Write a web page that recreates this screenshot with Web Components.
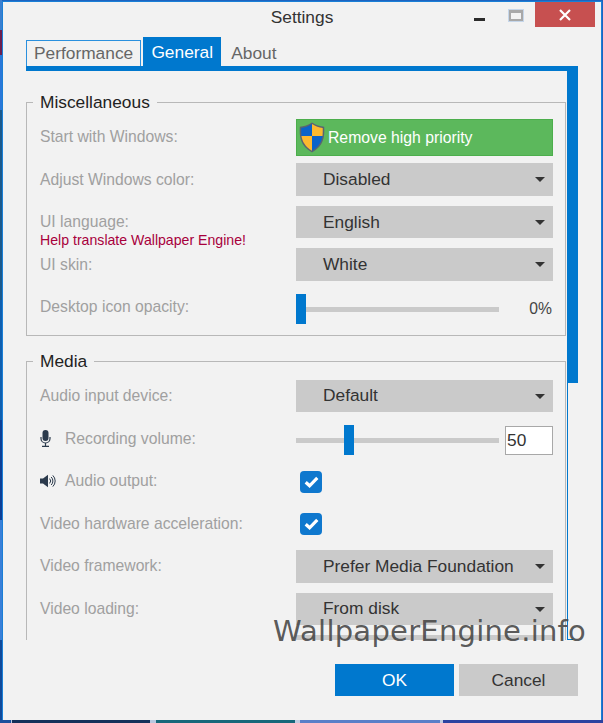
<!DOCTYPE html>
<html lang="en">
<head>
<meta charset="utf-8">
<title>Settings</title>
<style>
    html, body { margin: 0; height: 100%; }
    body {
        width: 603px;
        height: 723px;
        overflow: hidden;
        font-family: "Liberation Sans", Arial, sans-serif;
        /* Wallpaper strips that show around the window */
        background:
            linear-gradient(90deg, #1c4f9c 0 11px, #b9c8e0 11px 12px, #14305a 12px 150px, #b9c8e0 150px 156px, #17677a 156px 295px, #c0cce0 295px 300px, #5a7fc8 300px 440px, #c0cce0 440px 443px, #2c42a0 443px) bottom / 100% 3px no-repeat,
            linear-gradient(180deg, #3a7fd0 0 30px, #6b1f4f 30px 55px, #2a78d8 55px 110px, #1c5a8c 110px 300px, #0f5fb0 300px 420px, #0d3f96 420px 520px, #3a80d8 520px 640px, #114a9a 640px) left / 2px 100% no-repeat,
            #1d64c0;
    }
    .pct { font-size: 15.7px; color: #444; }
</style>
</head>
<body>

<settings-window heading="Settings">
    <tab-strip slot="tabs">
        <tab-item outlined>Performance</tab-item>
        <tab-item active>General</tab-item>
        <tab-item>About</tab-item>
    </tab-strip>

    <settings-group heading="Miscellaneous" top="21" start="7" end="11.5">
        <setting-row style="margin-bottom:-3px; --label-nudge:-1px">
            Start with Windows:
            <priority-button slot="control">Remove high priority</priority-button>
        </setting-row>
        <setting-row style="--label-nudge:2px">
            Adjust Windows color:
            <combo-box slot="control">Disabled</combo-box>
        </setting-row>
        <setting-row>
            UI language:
            <span slot="note">Help translate Wallpaper Engine!</span>
            <combo-box slot="control" style="padding-top:1px">English</combo-box>
        </setting-row>
        <setting-row style="--label-nudge:2px">
            UI skin:
            <combo-box slot="control">White</combo-box>
        </setting-row>
        <setting-row style="--label-nudge:-1px">
            Desktop icon opacity:
            <range-slider slot="control" pos="0"><span class="pct">0%</span></range-slider>
        </setting-row>
    </settings-group>

    <settings-group heading="Media" top="15" start="8.5" end="10">
        <setting-row>
            Audio input device:
            <combo-box slot="control">Default</combo-box>
        </setting-row>
        <setting-row>
            <svg slot="icon" width="11" height="17" viewBox="0 0 11 17" style="margin-right:14px">
                <rect x="2.5" y="0" width="6" height="11" rx="3" fill="#2b3a4c"/>
                <path d="M1 7v1.500a4.500 4.500 0 0 0 9 0V7" fill="none" stroke="#2b3a4c" stroke-width="1.200"/>
                <path d="M5.500 13v3M2 16.400h7" fill="none" stroke="#2b3a4c" stroke-width="1.200"/>
            </svg>
            Recording volume:
            <range-slider slot="control" pos="48"><value-box>50</value-box></range-slider>
        </setting-row>
        <setting-row>
            <svg slot="icon" width="16" height="14" viewBox="0 0 16 14" style="margin-right:9px">
                <path d="M0 4.500h3L8 .8v12.400L3 9.500H0z" fill="#2b3a4c"/>
                <path d="M9.600 4.600a3.400 3.400 0 0 1 0 4.800M11.200 3a5.600 5.600 0 0 1 0 8M12.800 1.400a7.800 7.800 0 0 1 0 11.200" fill="none" stroke="#2b3a4c" stroke-width="1"/>
            </svg>
            Audio output:
            <check-box slot="control"></check-box>
        </setting-row>
        <setting-row>
            Video hardware acceleration:
            <check-box slot="control" style="margin-top:1px"></check-box>
        </setting-row>
        <setting-row>
            Video framework:
            <combo-box slot="control">Prefer Media Foundation</combo-box>
        </setting-row>
        <setting-row>
            Video loading:
            <combo-box slot="control">From disk</combo-box>
        </setting-row>
        <setting-row>
            &nbsp;
            <combo-box slot="control"></combo-box>
        </setting-row>
    </settings-group>

    <push-button slot="actions" primary>OK</push-button>
    <push-button slot="actions">Cancel</push-button>
</settings-window>

<script>
// Fenêtre complète : barre de titre, onglets, zone défilante, boutons
class SettingsWindow extends HTMLElement {
    constructor() {
        super();
        this.attachShadow({ mode: "open" });
        this.shadowRoot.innerHTML = `
        <style>
            :host {
                display: flex;
                flex-direction: column;
                position: relative;
                box-sizing: border-box;
                width: 600px;
                height: 719px;
                margin: 1px 0 0 2px;
                border: 1px solid #1a7fd6;
                border-bottom-width: 0;
                background-color: #f2f2f2;
            }
            .titlebar {
                display: grid;
                grid-template-columns: 1fr auto 1fr;
                height: 35px;
                flex: none;
            }
            .title {
                grid-column: 2;
                font-size: 17.33px;
                line-height: 30px;
                color: #333;
            }
            .controls {
                grid-column: 3;
                justify-self: end;
                display: flex;
                align-items: flex-start;
                margin-right: 6px;
            }
            .min {
                width: 11px;
                height: 3px;
                margin: 16px 24px 0 0;
                background-color: #2b2b2b;
            }
            .max {
                box-sizing: border-box;
                width: 14px;
                height: 11px;
                margin: 8px 12px 0 0;
                border: 2px solid #a8a8a8;
                border-top-width: 3px;
                box-shadow: 0 0 0 1px #c5d6ea;
            }
            .close {
                display: flex;
                align-items: center;
                justify-content: center;
                width: 60px;
                height: 25px;
                background-color: #c75050;
            }
            .body {
                display: flex;
                flex: none;
                height: 569px;
                margin-left: 23px;
                margin-right: 23px;
            }
            .scroller {
                flex: 1;
                min-width: 0;
                overflow: hidden;
            }
            .bar {
                display: flex;
                flex-direction: column;
                flex: none;
                width: 11px;
                margin-top: -5px;
            }
            .thumb {
                height: 317px;
                flex: none;
                background-color: #0078ce;
            }
            .track {
                flex: 1;
                border-left: 1px solid #0078ce;
                background: linear-gradient(#0078ce, #0078ce) left bottom / 5px 1px no-repeat;
            }
            .actions {
                display: flex;
                justify-content: flex-end;
                gap: 5px;
                padding: 24px 23px 0 0;
            }
            .watermark {
                position: absolute;
                left: 270px;
                top: 610px;
                font-family: "DejaVu Sans", sans-serif;
                font-size: 29px;
                line-height: 38px;
                letter-spacing: 0.25px;
                white-space: nowrap;
                color: rgba(70, 70, 70, 0.9);
            }
        </style>
        <div class="titlebar">
            <div class="title"></div>
            <div class="controls">
                <div class="min"></div>
                <div class="max"></div>
                <div class="close">
                    <svg width="12" height="12" viewBox="0 0 12 12"><path d="M1 1l10 10M11 1L1 11" stroke="#fff" stroke-width="2.200" fill="none"/></svg>
                </div>
            </div>
        </div>
        <slot name="tabs"></slot>
        <div class="body">
            <div class="scroller"><slot></slot></div>
            <div class="bar"><div class="thumb"></div><div class="track"></div></div>
        </div>
        <div class="actions"><slot name="actions"></slot></div>
        <div class="watermark">WallpaperEngine.info</div>
      `;
        this.shadowRoot.querySelector(".title").textContent = this.getAttribute("heading");
    }
}
customElements.define("settings-window", SettingsWindow);

class TabStrip extends HTMLElement {
    constructor() {
        super();
        this.attachShadow({ mode: "open" });
        this.shadowRoot.innerHTML = `
        <style>
            :host {
                display: flex;
                align-items: flex-end;
                height: 29px;
                margin: 0 23px;
                border-bottom: 5px solid #0078ce;
            }
        </style>
        <slot></slot>
      `;
    }
}
customElements.define("tab-strip", TabStrip);

class TabItem extends HTMLElement {
    constructor() {
        super();
        this.attachShadow({ mode: "open" });
        this.shadowRoot.innerHTML = `
        <style>
            :host {
                display: block;
                box-sizing: border-box;
                height: 26px;
                padding: 0 10px;
                font-size: 17.33px;
                line-height: 26px;
                color: #666;
            }
            :host([outlined]) {
                margin-right: 2px;
                padding: 0 7px;
                border: 1px solid #2a90de;
                border-bottom: 0;
                line-height: 25px;
            }
            :host([active]) {
                height: 29px;
                padding: 0 8.2px;
                background-color: #0078ce;
                color: #fff;
                line-height: 31px;
            }
        </style>
        <slot></slot>
      `;
    }
}
customElements.define("tab-item", TabItem);

// Groupe avec légende, à la manière d'un fieldset
class SettingsGroup extends HTMLElement {
    constructor() {
        super();
        this.attachShadow({ mode: "open" });
        this.shadowRoot.innerHTML = `
        <style>
            :host {
                display: block;
                margin-right: 1px;
            }
            fieldset {
                margin: 0;
                padding: 0 12px 0 13px;
                border: 1px solid #b8b8b8;
                min-width: 0;
            }
            legend {
                margin-left: -7px;
                padding: 0 7px;
                font-size: 17.33px;
                line-height: 20px;
                color: #222;
            }
            .rows {
                display: flex;
                flex-direction: column;
                gap: 10px;
            }
        </style>
        <fieldset>
            <legend></legend>
            <div class="rows"><slot></slot></div>
        </fieldset>
      `;
        this.shadowRoot.querySelector("legend").textContent = this.getAttribute("heading");
        const rows = this.shadowRoot.querySelector(".rows");
        rows.style.paddingTop = this.getAttribute("start") + "px";
        rows.style.paddingBottom = this.getAttribute("end") + "px";
        this.style.marginTop = this.getAttribute("top") + "px";
    }
}
customElements.define("settings-group", SettingsGroup);

class SettingRow extends HTMLElement {
    constructor() {
        super();
        this.attachShadow({ mode: "open" });
        this.shadowRoot.innerHTML = `
        <style>
            :host {
                display: grid;
                grid-template-columns: 256px 257px;
                align-items: center;
                min-height: 32.5px;
                font-size: 15.7px;
                color: #a0a0a0;
            }
            .label {
                display: flex;
                align-items: center;
                margin-top: var(--label-nudge, 0);
            }
            .note {
                height: 0;
                font-size: 14.13px;
                line-height: 18px;
                color: #a8003c;
            }
        </style>
        <div>
            <div class="label"><slot name="icon"></slot><span><slot></slot></span></div>
            <div class="note"><slot name="note"></slot></div>
        </div>
        <slot name="control"></slot>
      `;
    }
}
customElements.define("setting-row", SettingRow);

class ComboBox extends HTMLElement {
    constructor() {
        super();
        this.attachShadow({ mode: "open" });
        this.shadowRoot.innerHTML = `
        <style>
            :host {
                display: flex;
                align-items: center;
                justify-content: space-between;
                box-sizing: border-box;
                height: 32.5px;
                padding: 0 8px 0 27px;
                background-color: #cacaca;
                font-size: 17.33px;
                color: #333;
            }
            .arrow {
                width: 0;
                height: 0;
                margin-top: 1px;
                border-left: 5px solid transparent;
                border-right: 5px solid transparent;
                border-top: 5px solid #333;
            }
        </style>
        <span><slot></slot></span>
        <div class="arrow"></div>
      `;
    }
}
customElements.define("combo-box", ComboBox);

class PriorityButton extends HTMLElement {
    constructor() {
        super();
        this.attachShadow({ mode: "open" });
        this.shadowRoot.innerHTML = `
        <style>
            :host {
                display: flex;
                align-items: center;
                box-sizing: border-box;
                height: 37px;
                padding-left: 2px;
                border: 1px solid #4cae4c;
                background-color: #5cb85c;
                font-size: 15.75px;
                color: #fff;
            }
            svg { margin-right: 3px; flex: none; }
        </style>
        <svg width="26" height="31" viewBox="0 0 26 31">
            <path d="M13 .5C9 3 5 4.400.8 4.800c-.5 10 .2 19 12.200 25.700C25 23.800 25.700 14.800 25.200 4.800 21 4.400 17 3 13 .5z" fill="#5b6470"/>
            <path d="M13 2C9.500 4.200 6 5.500 2.300 6 2.200 8.500 2.200 11 2.500 14H13z" fill="#0a63c9"/>
            <path d="M13 2c3.500 2.200 7 3.500 10.700 4 .1 2.500.1 5-.2 8H13z" fill="#fdb92f"/>
            <path d="M2.500 14c.8 5.500 3.500 10.500 10.500 14.800V14z" fill="#fdb92f"/>
            <path d="M23.500 14c-.8 5.500-3.500 10.500-10.500 14.800V14z" fill="#0a63c9"/>
        </svg>
        <span><slot></slot></span>
      `;
    }
}
customElements.define("priority-button", PriorityButton);

class RangeSlider extends HTMLElement {
    constructor() {
        super();
        this.attachShadow({ mode: "open" });
        this.shadowRoot.innerHTML = `
        <style>
            :host {
                display: flex;
                align-items: center;
                height: 30px;
                padding-top: 3px;
            }
            .track {
                position: relative;
                flex: none;
                width: 203px;
                height: 5px;
                margin-top: 1px;
                background-color: #cacaca;
            }
            .thumb {
                position: absolute;
                top: -13px;
                width: 10px;
                height: 30px;
                background-color: #0078ce;
            }
            .side {
                flex: 1;
                display: flex;
                justify-content: flex-end;
                padding-right: 1px;
            }
        </style>
        <div class="track"><div class="thumb"></div></div>
        <div class="side"><slot></slot></div>
      `;
        this.shadowRoot.querySelector(".thumb").style.left = this.getAttribute("pos") + "px";
    }
}
customElements.define("range-slider", RangeSlider);

class ValueBox extends HTMLElement {
    constructor() {
        super();
        this.attachShadow({ mode: "open" });
        this.shadowRoot.innerHTML = `
        <style>
            :host {
                display: block;
                box-sizing: border-box;
                width: 48px;
                height: 29px;
                margin: 1px -1px 0 0;
                padding-left: 1px;
                border: 1px solid #a8a8a8;
                background-color: #fff;
                font-size: 17.33px;
                line-height: 27px;
                color: #333;
            }
        </style>
        <slot></slot>
      `;
    }
}
customElements.define("value-box", ValueBox);

class CheckBox extends HTMLElement {
    constructor() {
        super();
        this.attachShadow({ mode: "open" });
        this.shadowRoot.innerHTML = `
        <style>
            :host {
                display: flex;
                align-items: center;
                justify-content: center;
                width: 22px;
                height: 22px;
                margin: 2px 0 0 4px;
                border-radius: 4px;
                background-color: #0f78ce;
            }
        </style>
        <svg width="15" height="12" viewBox="0 0 15 12">
            <path d="M1.700 6.200l3.900 3.600L13.300 1.900" fill="none" stroke="#fff" stroke-width="3.200"/>
        </svg>
      `;
    }
}
customElements.define("check-box", CheckBox);

class PushButton extends HTMLElement {
    constructor() {
        super();
        this.attachShadow({ mode: "open" });
        this.shadowRoot.innerHTML = `
        <style>
            :host {
                display: block;
                box-sizing: border-box;
                width: 119px;
                height: 32px;
                background-color: #cacaca;
                font-size: 17.33px;
                line-height: 32px;
                text-align: center;
                color: #333;
            }
            :host([primary]) {
                background-color: #0078ce;
                color: #fff;
            }
        </style>
        <slot></slot>
      `;
    }
}
customElements.define("push-button", PushButton);
</script>
</body>
</html>
